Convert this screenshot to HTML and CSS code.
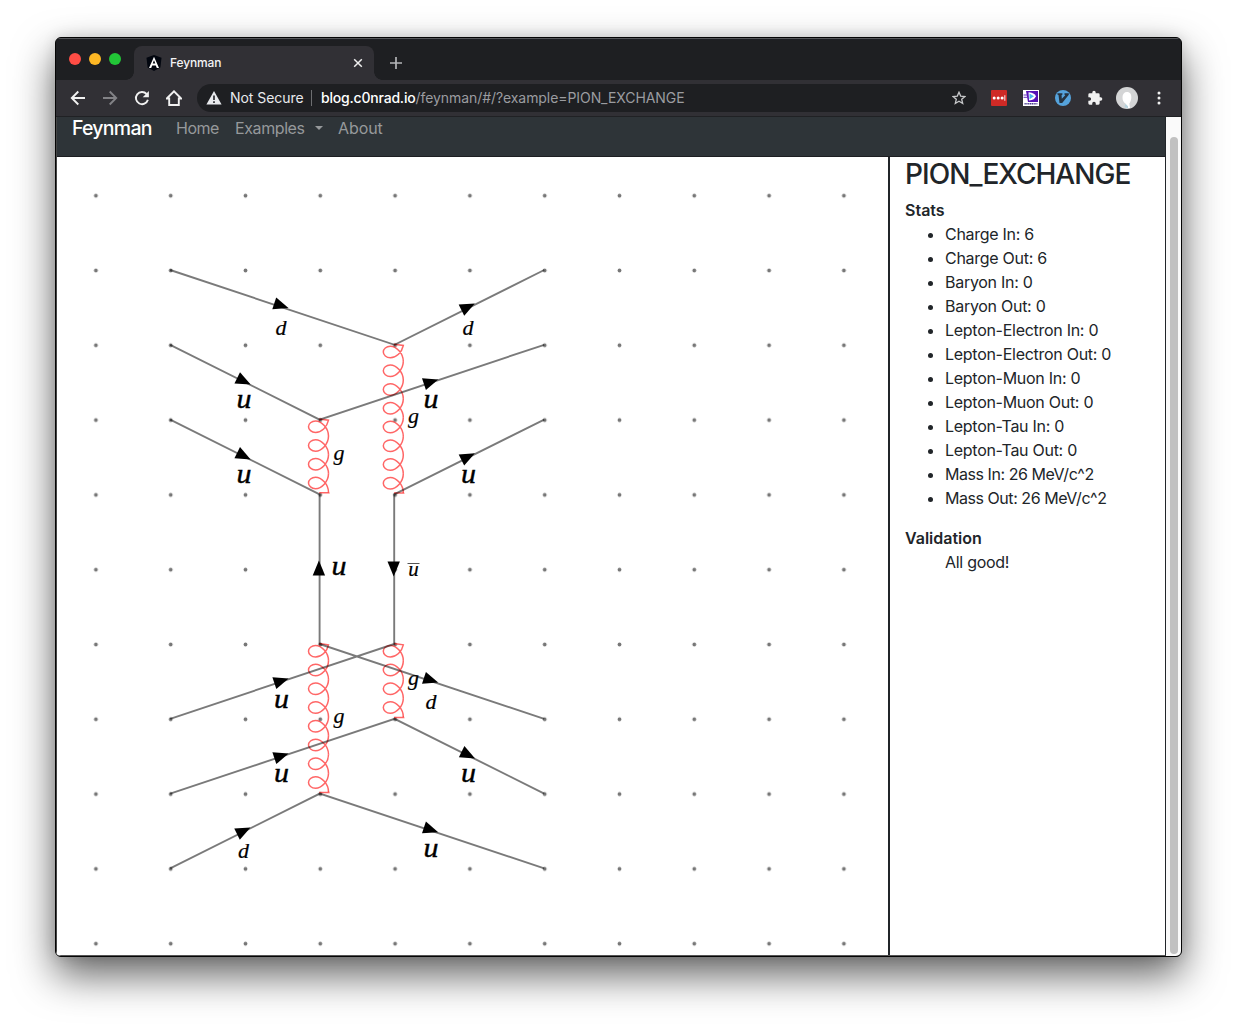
FILE: index.html
```html
<!DOCTYPE html>
<html lang="en">
<head>
<meta charset="utf-8">
<title>Feynman</title>
<link rel="stylesheet" href="styles.css">
</head>
<body>
<div class="window">
  <div class="tabstrip">
    <div class="lights"><i class="red"></i><i class="yellow"></i><i class="green"></i></div>
    <div class="tab">
      <svg class="favicon" width="16" height="16" viewBox="0 0 16 16"><path d="M8 0l7.500 2.700-1.100 9.900L8 16l-6.400-3.400L.5 2.700z" fill="#02060f"/><path d="M8 1.800L3 13h2.200l1-2.600h3.600l1 2.600H13zM8 5.200l1.300 3.400H6.700z" fill="#fff"/></svg>
      <span class="tab-title">Feynman</span>
      <svg width="10" height="10" viewBox="0 0 10 10"><path d="M1.200 1.200l7.600 7.600M8.800 1.200L1.200 8.800" stroke="#eee" stroke-width="1.500"/></svg>
    </div>
    <svg class="plus" width="12" height="12" viewBox="0 0 12 12"><path d="M6 0v12M0 6h12" stroke="#b4b5b8" stroke-width="1.700"/></svg>
  </div>
  <div class="toolbar">
    <div class="nav-icons">
      <svg width="16" height="16" viewBox="0 0 16 16"><path d="M15 8H2M8.300 1.500L1.800 8l6.500 6.500" fill="none" stroke="#f1f1f1" stroke-width="1.900"/></svg>
      <svg width="16" height="16" viewBox="0 0 16 16"><path d="M1 8h13M7.700 1.500L14.200 8l-6.500 6.500" fill="none" stroke="#828286" stroke-width="1.900"/></svg>
      <svg width="16" height="16" viewBox="0 0 16 16"><path d="M13.900 9.800A6.100 6.100 0 1 1 12.600 4" fill="none" stroke="#f1f1f1" stroke-width="1.900"/><path d="M14.900 1v6.200H8.700z" fill="#f1f1f1"/></svg>
      <svg width="16" height="16" viewBox="0 0 16 16"><path d="M.8 8.500L8 1.300l7.200 7.200H12.800V15H3.200V8.500z" fill="none" stroke="#f1f1f1" stroke-width="1.900"/></svg>
    </div>
    <div class="omnibox">
      <svg width="16" height="14" viewBox="0 0 16 14"><path d="M8 0l7.600 13.500H.4z" fill="#e8eaed"/><path d="M8 4.500v4.500M8 10.200v1.800" stroke="#1e1f22" stroke-width="1.600"/></svg>
      <span class="secure">Not Secure</span><span class="sep"></span>
      <span class="url"><b>blog.c0nrad.io</b><span class="path">/feynman/#/?example=PION_EXCHANGE</span></span>
      <svg width="14" height="14" viewBox="0 0 14 14"><path d="M7 1.200l1.700 3.900 4.200.4-3.200 2.800 1 4.200L7 10.300l-3.700 2.200 1-4.200L1.100 5.500l4.200-.4z" fill="none" stroke="#c7c8ca" stroke-width="1.300"/></svg>
    </div>
    <div class="extensions">
      <svg width="16" height="16" viewBox="0 0 16 16"><rect width="16" height="16" rx="1" fill="#cf2a26"/><g fill="#fff"><circle cx="3.200" cy="8" r="1.500"/><circle cx="7.200" cy="8" r="1.500"/><circle cx="11.100" cy="8" r="1.500"/><path d="M13.400 5.300h.9v5.400h-.9z"/></g></svg>
      <svg width="16" height="16" viewBox="0 0 16 16"><path fill="#fff" d="M0 0h16v16H0z"/><path d="M3 1h12v11H5z" fill="#5512b5"/><path d="M5.500 2.200Q12.500 3 12.800 6.200 12 9.800 6 10.600z" fill="#fff"/><path d="M6.500 3.500l4.500 2.800-4.500 2.900z" fill="#4bb8ee"/><path d="M.5 5h4M.5 7.300h4" stroke="#6533bf"/><path d="M1.500 13.800h13" stroke="#4b3f91" stroke-width="1.500" stroke-dasharray="1.300 .5"/></svg>
      <svg width="16" height="16" viewBox="0 0 16 16"><circle cx="8" cy="8" r="8" fill="#55a3dc"/><path d="M2.400 3.200h5v1.500l-.8.400.2 3.700 3.500-3.600-.8-.5V3.200h4.300v1.500L7.200 13H4.500L3.500 5l-1.100-.4z" fill="#263340"/></svg>
      <svg width="16" height="16" viewBox="0 0 24 24"><path d="M20.500 11H19V7a2 2 0 0 0-2-2h-4V3.500a2.500 2.500 0 0 0-5 0V5H4a2 2 0 0 0-2 2v3.800h1.500a2.700 2.700 0 0 1 0 5.400H2V20a2 2 0 0 0 2 2h3.800v-1.500a2.700 2.700 0 0 1 5.400 0V22H17a2 2 0 0 0 2-2v-4h1.500a2.500 2.500 0 0 0 0-5z" fill="#f1f1f1"/></svg>
      <svg class="avatar" width="22" height="22" viewBox="0 0 22 22"><circle cx="11" cy="11" r="11" fill="#d4d5d6"/><path d="M11 5c3 0 4.700 2.300 4.300 6-.3 3-1.300 4.500-2 5.500l.7 4.500h-3.500l-1-4.500C7.500 15.500 6.400 13 6.500 10c.1-3 1.800-5 4.500-5z" fill="#fff"/><path d="M8.500 20l1-3.300 2.500 2.600v2.300z" fill="#b6d2dd"/></svg>
      <svg class="dots" width="4" height="14" viewBox="0 0 4 14"><g fill="#f1f1f1"><circle cx="2" cy="2" r="1.500"/><circle cx="2" cy="7" r="1.500"/><circle cx="2" cy="12" r="1.500"/></g></svg>
    </div>
  </div>
  <div class="viewport">
    <div class="page">
      <nav class="navbar"><a class="brand">Feynman</a><a class="home">Home</a><a class="examples">Examples<i class="caret"></i></a><a>About</a></nav>
      <main class="content">
        <svg class="diagram" width="831" height="798" viewBox="57 157 831 798">
          <defs>
            <pattern id="grid" x="58.500" y="158.300" width="74.800" height="74.800" patternUnits="userSpaceOnUse"><circle cx="37.400" cy="37.400" r="1.900" fill="#777"/></pattern>
            <path id="arrow" d="M8 0L-7-6.200V6.200z"/>
            <path id="coil" d="M0 0c0 8.100-7 15.100-13 15.100-4 0-7-2.750-7-5.720s3-5.730 7-5.730c6 0 13 7 13 15.100"/>
            <path id="coil-start" d="M-9.300-1.200L0 0c-1.500 7-7 12.200-13 12.200-4 0-7-2.750-7-5.720s3-5.730 7-5.730c6 0 13 7 13 15.100"/>
            <g id="gluon4"><use href="#coil-start"/><use href="#coil" y="15.850"/><use href="#coil" y="34.600"/><use href="#coil" y="53.350"/><path d="M0 72.100l.2.500h-9.500"/></g>
            <g id="gluon8"><use href="#coil-start"/><use href="#coil" y="15.850"/><use href="#coil" y="34.600"/><use href="#coil" y="53.350"/><use href="#coil" y="72.100"/><use href="#coil" y="90.850"/><use href="#coil" y="109.600"/><use href="#coil" y="128.350"/><path d="M0 147.100l.2.500h-9.500"/></g>
          </defs>
          <path d="M57 157h831v798H57z" fill="url(#grid)"/>
          <g class="gluons">
            <use href="#gluon4" x="328.500" y="420.200"/><use href="#gluon8" x="403.300" y="345.500"/>
            <use href="#gluon8" x="328.500" y="644.800"/><use href="#gluon4" x="403.300" y="644.800"/>
          </g>
          <path class="fermions" d="M170.200 270L394.600 344.800L544.200 270M170.200 344.800L319.600 419.600L544.200 344.800M170.200 419.600L319.600 494.400V644L544.200 718.800M544.200 419.600L394.200 494.400V644L170.200 718.800M170.200 793.600L394.600 718.800L544.200 793.600M170.200 868.400L319.800 793.600L544.200 868.400"/>
          <g>
            <use href="#arrow" transform="translate(280.900 305.500) rotate(18.430)"/>
            <use href="#arrow" transform="translate(467.700 307) rotate(-26.570)"/>
            <use href="#arrow" transform="translate(243.500 381) rotate(26.570)"/>
            <use href="#arrow" transform="translate(430.600 382) rotate(-18.430)"/>
            <use href="#arrow" transform="translate(243.500 455.800) rotate(26.570)"/>
            <use href="#arrow" transform="translate(467.700 456.800) rotate(-26.570)"/>
            <use href="#arrow" transform="translate(318.900 568.400) rotate(-90)"/>
            <use href="#arrow" transform="translate(393.700 568.400) rotate(90)"/>
            <use href="#arrow" transform="translate(281 681) rotate(-18.430)"/>
            <use href="#arrow" transform="translate(430.600 680) rotate(18.430)"/>
            <use href="#arrow" transform="translate(281 756) rotate(-18.430)"/>
            <use href="#arrow" transform="translate(467.900 754.800) rotate(26.570)"/>
            <use href="#arrow" transform="translate(243.300 831) rotate(-26.570)"/>
            <use href="#arrow" transform="translate(430.600 829.700) rotate(18.430)"/>
          </g>
          <g class="labels">
            <text x="281" y="334.500">d</text><text x="468" y="334.500">d</text><text x="431" y="708.500">d</text><text x="243.500" y="858">d</text>
            <g class="up">
              <text x="244" y="408" textLength="15" lengthAdjust="spacingAndGlyphs">u</text>
              <text x="244" y="483" textLength="15" lengthAdjust="spacingAndGlyphs">u</text>
              <text x="431" y="408" textLength="15" lengthAdjust="spacingAndGlyphs">u</text>
              <text x="468.500" y="483" textLength="15" lengthAdjust="spacingAndGlyphs">u</text>
              <text x="339" y="575" textLength="15" lengthAdjust="spacingAndGlyphs">u</text>
              <text x="281.500" y="707.500" textLength="15" lengthAdjust="spacingAndGlyphs">u</text>
              <text x="281.500" y="782" textLength="15" lengthAdjust="spacingAndGlyphs">u</text>
              <text x="468.500" y="782" textLength="15" lengthAdjust="spacingAndGlyphs">u</text>
              <text x="431" y="857" textLength="15" lengthAdjust="spacingAndGlyphs">u</text>
            </g>
            <text x="339" y="460">g</text><text x="413.500" y="423">g</text><text x="339" y="722.500">g</text><text x="413.500" y="685">g</text>
            <text class="anti" x="413.500" y="576">u</text>
          </g>
          <path d="M407.500 563.500h12" stroke="#555"/>
        </svg>
        <aside class="sidebar">
          <h1>PION_EXCHANGE</h1>
          <h2>Stats</h2>
          <ul>
            <li>Charge In: 6</li><li>Charge Out: 6</li><li>Baryon In: 0</li><li>Baryon Out: 0</li>
            <li>Lepton-Electron In: 0</li><li>Lepton-Electron Out: 0</li><li>Lepton-Muon In: 0</li><li>Lepton-Muon Out: 0</li>
            <li>Lepton-Tau In: 0</li><li>Lepton-Tau Out: 0</li><li class="mass">Mass In: 26 MeV/c^2</li><li class="mass">Mass Out: 26 MeV/c^2</li>
          </ul>
          <h2>Validation</h2>
          <p>All good!</p>
        </aside>
      </main>
    </div>
    <div class="scrollbar"><div class="thumb"></div></div>
  </div>
</div>
</body>
</html>
```
FILE: styles.css
```css
* { box-sizing: border-box; }
body { margin: 0; height: 1030px; padding: 37px 55px; background: #fff; font-family: Inter, "Liberation Sans", sans-serif; overflow: hidden; }
svg { flex: none; display: block; }
.window { width: 1127px; height: 920px; display: flex; flex-direction: column; border: 1px solid #050505; border-radius: 6px; overflow: hidden; background: #202124; box-shadow: 0 18px 40px rgba(0,0,0,.62), 0 0 14px rgba(0,0,0,.12); }
.tabstrip { height: 42px; flex: none; display: flex; align-items: flex-start; background: #1e1f22; border-top: 1px solid #56575a; padding-left: 13px; }
.lights { display: flex; gap: 8px; padding-top: 14px; width: 65px; }
.lights i { width: 12px; height: 12px; border-radius: 50%; }
.red { background: #ff4d45; } .yellow { background: #fdb724; } .green { background: #22c637; }
.tab { position: relative; width: 240px; height: 34px; margin-top: 7px; padding: 0 11px 0 12px; display: flex; align-items: center; background: #313035; border-radius: 8px 8px 0 0; color: #f3f3f4; font-size: 12px; }
.tab::before, .tab::after { content: ""; position: absolute; bottom: 0; width: 8px; height: 8px; }
.tab::before { left: -8px; background: radial-gradient(circle at 0 0, transparent 7.5px, #313035 8px); }
.tab::after { right: -8px; background: radial-gradient(circle at 100% 0, transparent 7.5px, #313035 8px); }
.tab-title { flex: 1; margin-left: 8px; padding-bottom: 2px; font-weight: 500; letter-spacing: -.15px; }
.plus { margin: 18px 0 0 16px; }
.toolbar { height: 37px; flex: none; display: flex; align-items: center; background: #313035; border-bottom: 1px solid #202124; padding: 0 15px 0 14px; }
.nav-icons { display: flex; gap: 16px; width: 127px; }
.omnibox { width: 780px; height: 28px; border-radius: 14px; background: #1e1f22; display: flex; align-items: center; padding: 0 11px 0 9px; color: #e8eaed; font-size: 14px; }
.secure { width: 73px; margin-left: 8px; padding-bottom: 1px; white-space: nowrap; letter-spacing: -.05px; }
.sep { width: 1px; height: 16px; margin: 0 9px 0 8px; background: #6d6e71; }
.url { flex: 1; padding-bottom: 1px; white-space: nowrap; color: #9b9ca0; letter-spacing: -.07px; }
.url b { font-weight: 500; color: #fff; letter-spacing: -.2px; }
.extensions { display: flex; align-items: center; gap: 16px; margin-left: 14px; }
.avatar { margin-left: -3px; } .dots { margin-left: 3px; }
.viewport { flex: 1; min-height: 0; display: flex; background: #fafafa; }
.page { width: 1110px; display: flex; flex-direction: column; background: #fff; border-left: 1px solid #444; border-right: 1px solid #212529; border-bottom: 1px solid #555; }
.navbar { height: 40px; flex: none; display: flex; align-items: flex-start; background: #2e3438; border-bottom: 1px solid #1d1e22; padding-left: 15px; color: #96999b; font-size: 16px; line-height: 22px; letter-spacing: -.1px; }
.brand { width: 104px; color: #fff; font-size: 19.500px; letter-spacing: -.75px; font-weight: 500; }
.home { width: 59px; letter-spacing: -.5px; }
.examples { width: 103px; display: flex; align-items: center; letter-spacing: -.4px; }
.caret { margin-left: 10px; border: 4.500px solid transparent; border-top-color: #96999b; border-bottom: 0; }
.content { flex: 1; min-height: 0; display: flex; }
.diagram { height: 798px; }
.gluons { fill: none; stroke: #ff0000; stroke-opacity: .6; stroke-width: 1.500; }
.fermions { fill: none; stroke: #000; stroke-opacity: .52; stroke-width: 1.900; }
.labels { font: italic 22px "Liberation Serif", serif; text-anchor: middle; stroke: #000; stroke-width: .2; }
.up { font-size: 27px; stroke-width: .4; }
.anti { font-size: 21px; }
.sidebar { flex: 1; border-left: 2px solid #212529; padding: 0 14px 0 15px; color: #212529; font-size: 16px; line-height: 24px; }
h1 { margin: 1px 0 7px; font-size: 28px; line-height: 33px; font-weight: 500; letter-spacing: -.97px; }
h2 { margin: 0; font-size: 16px; line-height: 24px; font-weight: 600; }
ul { margin: 0 0 16px; padding-left: 40px; letter-spacing: -.28px; }
.mass { letter-spacing: -.45px; }
p { margin: 0 0 0 40px; letter-spacing: -.28px; }
.scrollbar { flex: 1; padding: 20px 3px 2px 4px; display: flex; }
.thumb { width: 8px; border-radius: 4px; background: #c1c1c1; }
```
